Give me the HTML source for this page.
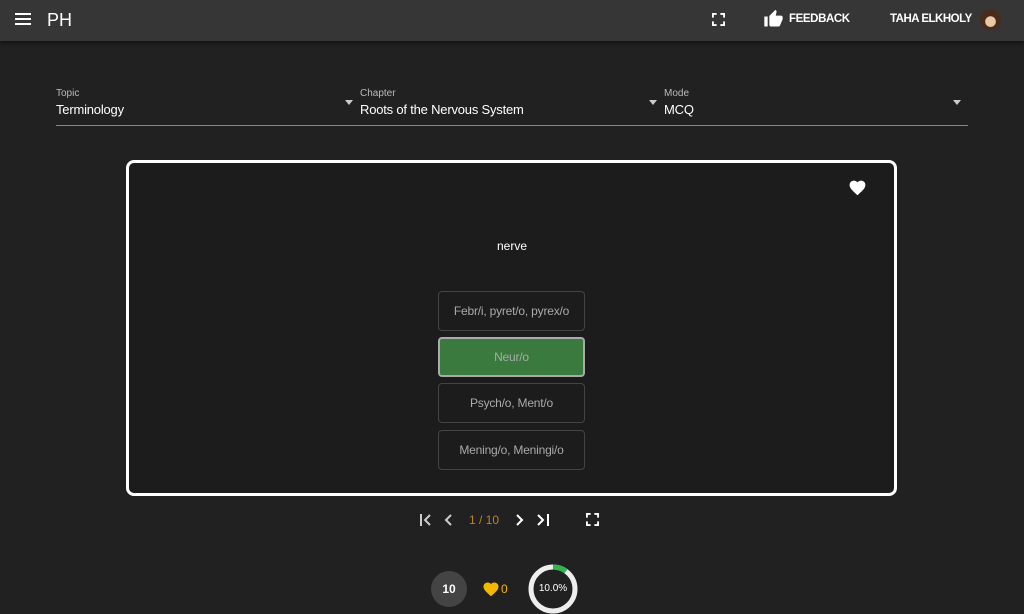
<!DOCTYPE html>
<html><head><style>
*{box-sizing:border-box;margin:0;padding:0}
body{width:1024px;height:613px;background:#212121;font-family:"Liberation Sans",sans-serif;color:#fff;position:relative;overflow:hidden}
.bar{position:absolute;left:0;top:0;width:1024px;height:41px;background:#363636;box-shadow:0 2px 4px rgba(0,0,0,.5)}
.a{position:absolute}
.lbl{font-size:10px;color:#bbb}
.val{font-size:13px;color:#fff;letter-spacing:-0.2px}
.opt{position:absolute;left:438px;width:147px;height:40px;border:1px solid #444;border-radius:4px;background:#1c1c1c;color:#aaa;font-size:12px;text-align:center;line-height:38px;letter-spacing:-0.2px}
</style></head><body>
<div class="bar">
 <div class="a" style="left:15px;top:13px;width:16px;height:2px;background:#fff;box-shadow:0 5px 0 #fff,0 10px 0 #fff"></div>
 <div class="a" style="left:47px;top:10px;font-size:18px">PH</div>
 <svg class="a" style="left:712px;top:13px" width="13" height="13" viewBox="0 0 14 14" fill="none" stroke="#fff" stroke-width="2"><path d="M1 5V1h4M9 1h4v4M13 9v4H9M5 13H1V9"/></svg>
 <svg class="a" style="left:763px;top:9px" width="21" height="20" viewBox="0 0 24 24" fill="#fff"><path d="M1 21h4V9H1v12zm22-11c0-1.1-.9-2-2-2h-6.3l1-4.6v-.3c0-.4-.2-.8-.4-1.1L14.2 1 7.6 7.6C7.2 7.9 7 8.4 7 9v10c0 1.1.9 2 2 2h9c.8 0 1.5-.5 1.8-1.2l3-7.1c.1-.2.2-.5.2-.7v-2z"/></svg>
 <div class="a" style="left:789px;top:13px;font-size:11.5px;font-weight:bold;letter-spacing:-0.4px">FEEDBACK</div>
 <div class="a" style="left:890px;top:13px;font-size:11.5px;font-weight:bold;letter-spacing:-0.5px">TAHA ELKHOLY</div>
 <div class="a" style="left:980px;top:9px;width:21px;height:21px;border-radius:50%;background:radial-gradient(circle at 50% 60%,#e8c9a8 30%,#4a2a1a 35%)"></div>
</div>
<div class="a lbl" style="left:56px;top:88px">Topic</div><div class="a val" style="left:56px;top:102px">Terminology</div>
<div class="a lbl" style="left:360px;top:88px">Chapter</div><div class="a val" style="left:360px;top:102px">Roots of the Nervous System</div>
<div class="a lbl" style="left:664px;top:88px">Mode</div><div class="a val" style="left:664px;top:102px">MCQ</div>
<div class="a" style="left:345px;top:100px;border:4px solid transparent;border-top:5px solid #ccc"></div>
<div class="a" style="left:649px;top:100px;border:4px solid transparent;border-top:5px solid #ccc"></div>
<div class="a" style="left:953px;top:100px;border:4px solid transparent;border-top:5px solid #ccc"></div>
<div class="a" style="left:56px;top:125px;width:912px;height:1px;background:#888"></div>
<div class="a" style="left:126px;top:160px;width:771px;height:336px;border:3px solid #fff;border-radius:8px;background:#1c1c1c"></div>
<svg class="a" style="left:848px;top:178px" width="19" height="18" viewBox="0 0 24 22" fill="#fff"><path d="M12 21.4l-1.5-1.3C5.4 15.4 2 12.3 2 8.5 2 5.4 4.4 3 7.5 3c1.7 0 3.4.8 4.5 2.1C13.1 3.8 14.8 3 16.5 3 19.6 3 22 5.4 22 8.5c0 3.8-3.4 6.9-8.5 11.5L12 21.4z"/></svg>
<div class="a" style="left:0;width:1024px;top:239px;text-align:center;font-size:12px">nerve</div>
<div class="opt" style="top:291px">Febr/i, pyret/o, pyrex/o</div>
<div class="opt" style="top:337px;background:#3a7a3e;border:2px solid #aaa;line-height:36px">Neur/o</div>
<div class="opt" style="top:383px">Psych/o, Ment/o</div>
<div class="opt" style="top:430px">Mening/o, Meningi/o</div>
<svg class="a" style="left:418px;top:513px" width="135" height="14" viewBox="0 0 135 14" fill="none" stroke="#ccc" stroke-width="2"><path d="M3 1v12M12 2l-5 5 5 5M33 2l-5 5 5 5"/><path stroke="#fff" d="M99 2l5 5-5 5M120 2l5 5-5 5M130 1v12"/></svg>
<div class="a" style="left:469px;top:513px;font-size:12px;color:#b8862a">1 / 10</div>
<svg class="a" style="left:586px;top:513px" width="13" height="13" viewBox="0 0 14 14" fill="none" stroke="#fff" stroke-width="2"><path d="M1 5V1h4M9 1h4v4M13 9v4H9M5 13H1V9"/></svg>
<div class="a" style="left:431px;top:571px;width:36px;height:36px;border-radius:50%;background:#444;text-align:center;line-height:36px;font-size:12px;font-weight:bold">10</div>
<svg class="a" style="left:482px;top:580px" width="18" height="17" viewBox="0 0 24 22" fill="#f5b800"><path d="M12 21.4l-1.5-1.3C5.4 15.4 2 12.3 2 8.5 2 5.4 4.4 3 7.5 3c1.7 0 3.4.8 4.5 2.1C13.1 3.8 14.8 3 16.5 3 19.6 3 22 5.4 22 8.5c0 3.8-3.4 6.9-8.5 11.5L12 21.4z"/></svg>
<div class="a" style="left:501px;top:582px;font-size:12px;color:#f5b800">0</div>
<svg class="a" style="left:528px;top:564px" width="50" height="50" viewBox="0 0 50 50"><circle cx="25" cy="25" r="22" fill="none" stroke="#eee" stroke-width="5"/><path d="M25 3A22 22 0 0 1 38 7.2" fill="none" stroke="#2eb84b" stroke-width="5"/></svg>
<div class="a" style="left:528px;top:583px;width:50px;text-align:center;font-size:10px">10.0%</div>
</body></html>
